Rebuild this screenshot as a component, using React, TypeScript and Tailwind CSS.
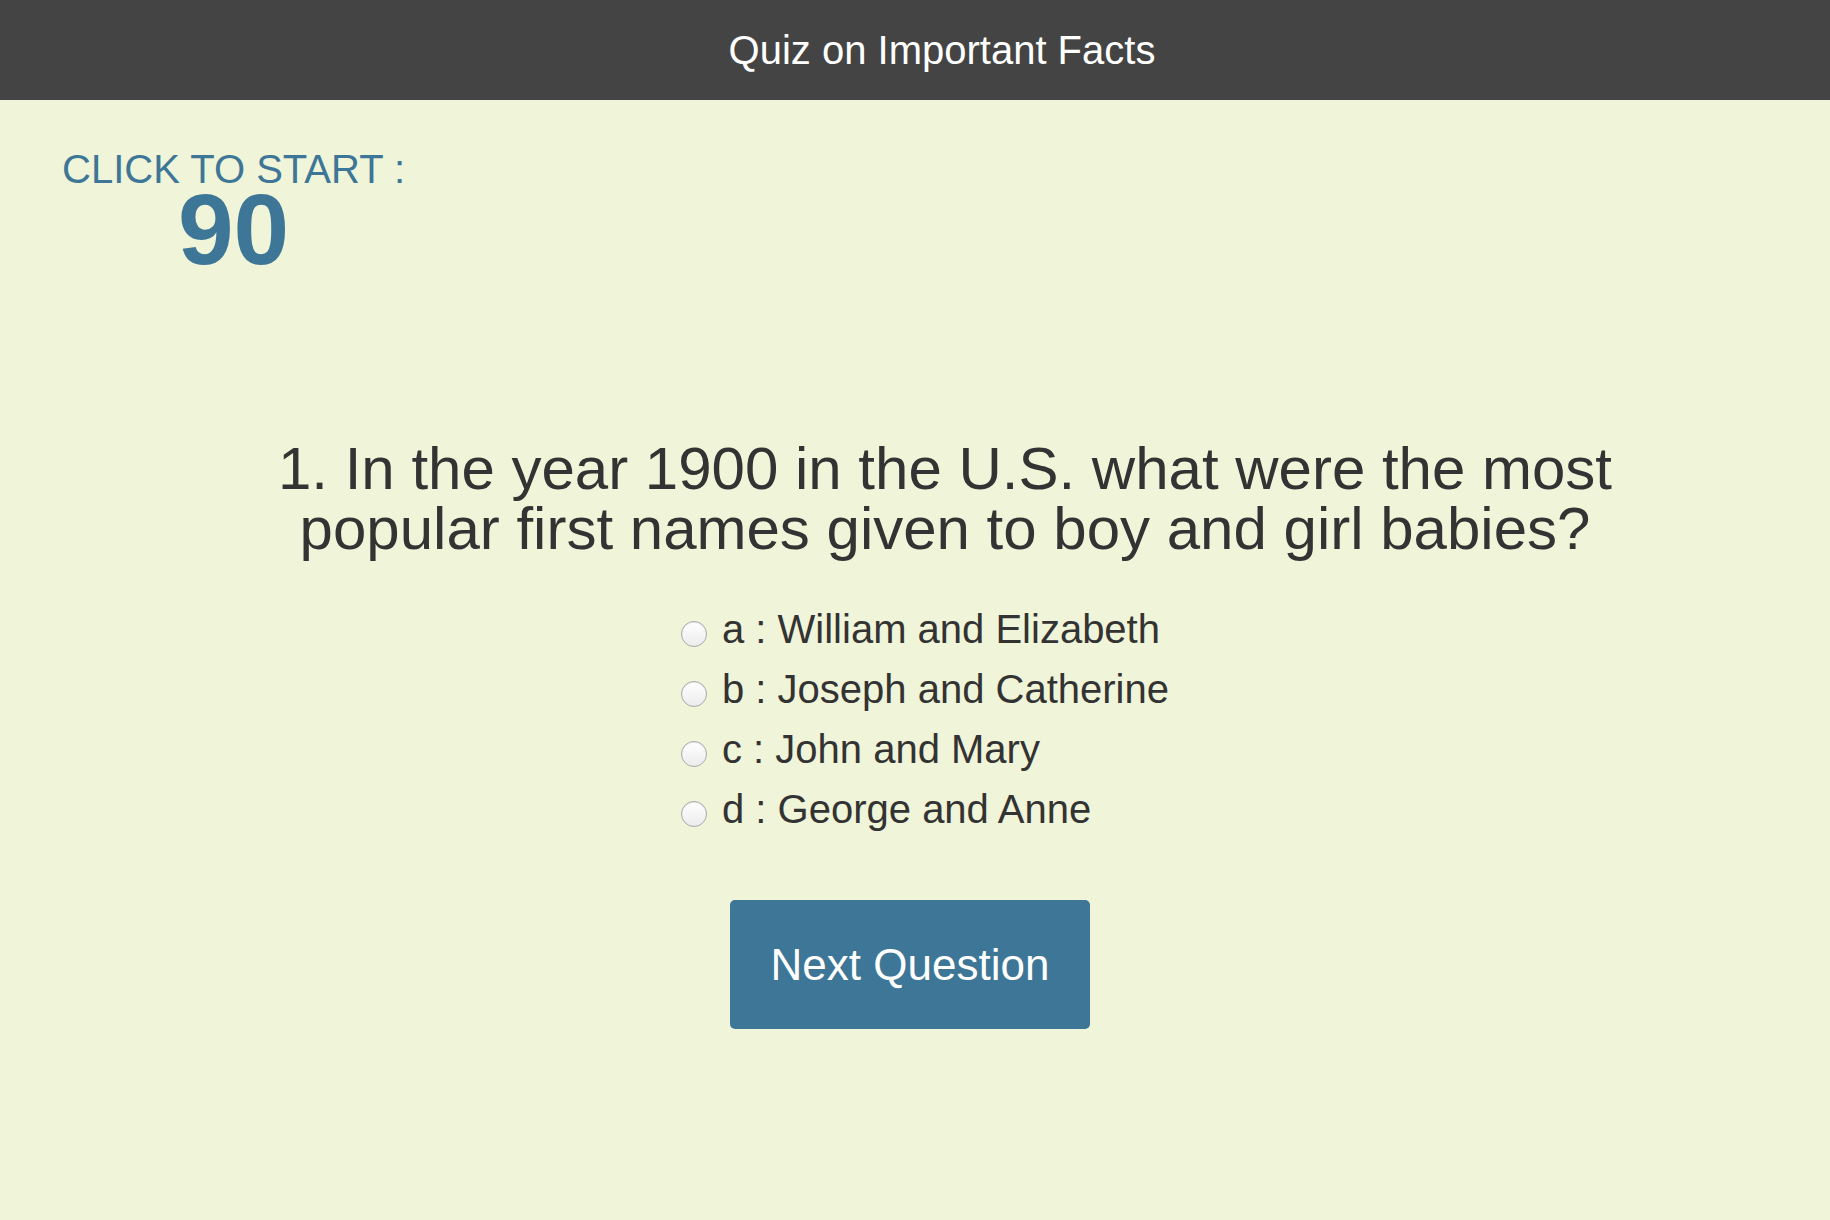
import { useState } from "react";

const options = [
  { key: "a", label: "William and Elizabeth" },
  { key: "b", label: "Joseph and Catherine" },
  { key: "c", label: "John and Mary" },
  { key: "d", label: "George and Anne" },
];

export default function App() {
  const [picked, setPicked] = useState<string | null>(null);

  return (
    <div className="min-h-screen bg-[#f0f4d8] font-['Liberation_Sans',Arial,sans-serif]">
      <header className="h-[100px] bg-[#444444] flex items-center justify-center pl-[54px]">
        <h1 className="text-[40px] leading-[40px] text-white font-light">Quiz on Important Facts</h1>
      </header>

      <div className="pl-[62px] pt-[49px]">
        <div className="inline-flex flex-col items-center text-[#3d7696] cursor-pointer">
          <span className="text-[40px] leading-[40px]">CLICK TO START :</span>
          <span className="text-[100px] leading-[80px] font-bold">90</span>
        </div>
      </div>

      <div className="mt-[170px] pl-[60px] text-center text-[60px] leading-[60px] text-[#333333] font-light">
        1. In the year 1900 in the U.S. what were the most
        <br />
        popular first names given to boy and girl babies?
      </div>

      <div className="mt-[40px] flex justify-center pl-[20px]">
        <div className="flex flex-col">
          {options.map((o) => (
            <label key={o.key} className="flex items-start h-[60px] cursor-pointer">
              <input
                type="radio"
                name="answer"
                checked={picked === o.key}
                onChange={() => setPicked(o.key)}
                className="appearance-none mt-[22px] w-[26px] h-[26px] rounded-full border border-[#aaaaaa] bg-gradient-to-b from-white to-[#ececec] shadow-[inset_0_1px_1px_rgba(0,0,0,0.08)] checked:border-[#3d7696] checked:border-[8px]"
              />
              <span className="ml-[15px] text-[40px] leading-[60px] text-[#333333]">
                {o.key} : {o.label}
              </span>
            </label>
          ))}
        </div>
      </div>

      <div className="mt-[61px] flex justify-center pr-[10px]">
        <button
          type="button"
          className="w-[360px] h-[129px] rounded-[5px] bg-[#3d7696] text-white text-[44px] leading-none"
        >
          Next Question
        </button>
      </div>
    </div>
  );
}
